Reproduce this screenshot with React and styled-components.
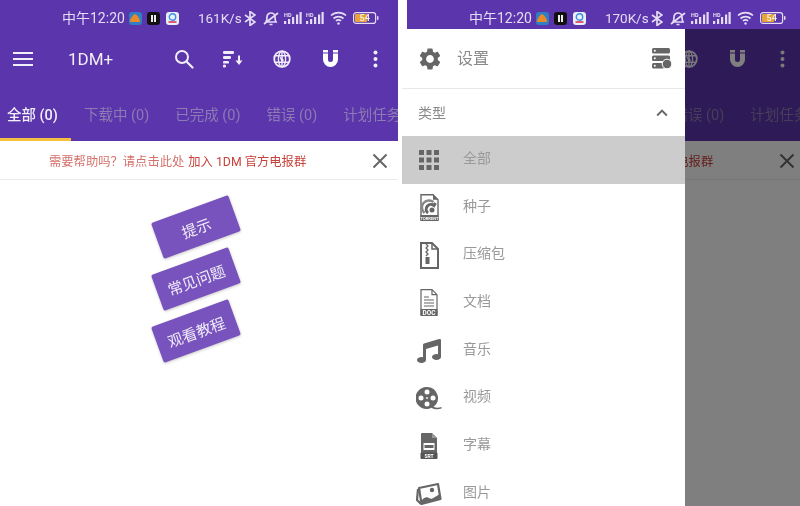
import React from 'react'
import styled, { createGlobalStyle } from 'styled-components'
import { MdSettings, MdKeyboardArrowUp } from 'react-icons/md'
import { FaMusic } from 'react-icons/fa'

const GlobalStyle = createGlobalStyle`
  html, body { margin: 0; padding: 0; background: #fff; }
  body { width: 800px; height: 506px; overflow: hidden; font-family: Roboto, "Noto Sans CJK SC", sans-serif; }
`

const Page = styled.div`
  display: flex;
  gap: 4px;
  width: 800px;
  height: 506px;
  overflow: hidden;
  background: #fff;
  filter: blur(0.4px);
`

const Phone = styled.div`
  position: relative;
  width: 398px;
  height: 506px;
  overflow: hidden;
  flex: none;
`

const Screen = styled.div`
  display: flex;
  flex-direction: column;
  width: 398px;
  height: 506px;
  margin-left: ${p => p.$shift || 0}px;
`

const Header = styled.div`
  background: #5b35ac;
`

const StatusBar = styled.div`
  position: relative;
  z-index: 3;
  display: flex;
  align-items: center;
  height: 22px;
  padding: 7px 0 0 62px;
  color: #e4dcf2;
  font-size: 14px;
  background: #5b35ac;
`

const Clock = styled.span`
  padding-bottom: 2px;
`

const AppDot = styled.span`
  width: 13px;
  height: 13px;
  margin-left: ${p => p.$gap}px;
  border-radius: 3px;
  background: ${p => p.$color};
  display: flex;
  align-items: center;
  justify-content: center;
  flex: none;
`

const Speed = styled.span`
  margin-left: 19px;
  font-size: 13.5px;
  width: 45px;
`

const StatusIcon = styled.svg`
  margin-left: ${p => p.$gap}px;
  flex: none;
`

const Toolbar = styled.div`
  display: flex;
  align-items: center;
  height: 60px;
  padding: 0 3px 0 13px;
  color: #f2eef9;
`

const Title = styled.div`
  margin-left: 35px;
  font-size: 17px;
  font-weight: 400;
`

const Actions = styled.div`
  display: flex;
  margin-left: auto;
`

const Action = styled.div`
  display: flex;
  align-items: center;
  justify-content: center;
  width: ${p => p.$width || 49}px;
`

const Tabs = styled.div`
  display: flex;
  height: 52px;
  margin-left: -6px;
  overflow: hidden;
`

const Tab = styled.div`
  flex: none;
  padding: 14px 13px 0;
  box-sizing: border-box;
  height: 52px;
  font-size: 14.5px;
  white-space: nowrap;
  font-weight: ${p => (p.$active ? 500 : 400)};
  color: ${p => (p.$active ? '#f3effa' : '#8d7bb4')};
  border-bottom: 3px solid ${p => (p.$active ? '#f5bf42' : 'transparent')};
`

const Banner = styled.div`
  display: flex;
  align-items: center;
  height: 37px;
  padding: 1px 0 0 49px;
  border-bottom: 1px solid #ebebeb;
  background: #fff;
  font-size: 12.3px;
  color: #d4716b;
`

const BannerLink = styled.span`
  margin-left: 4px;
  color: #c8413a;
`

const Close = styled.svg`
  margin-left: auto;
  margin-right: 10px;
`

const Body = styled.div`
  flex: 1;
  display: flex;
  flex-direction: column;
  align-items: center;
  gap: 14px;
  padding: 28px 6px 0 0;
  background: #fff;
`

const TipButton = styled.div`
  width: 82px;
  height: 38px;
  display: flex;
  align-items: center;
  justify-content: center;
  border-radius: 2px;
  background: #7853bd;
  color: #f0ebf8;
  font-size: 15px;
  transform: rotate(-20deg);
  box-shadow: 0 1px 3px rgba(0, 0, 0, 0.22);
`

const Scrim = styled.div`
  position: absolute;
  top: 29px;
  left: 0;
  right: 0;
  bottom: 0;
  background: rgba(0, 0, 0, 0.5);
`

const Drawer = styled.div`
  position: absolute;
  top: 29px;
  left: 0;
  bottom: 0;
  width: 283px;
  background: #fff;
  color: #8a8a8a;
`

const SettingsRow = styled.div`
  display: flex;
  align-items: center;
  height: 59px;
  padding: 0 13px 0 15px;
  border-bottom: 1px solid #e8e8e8;
  font-size: 16px;
`

const SettingsLabel = styled.span`
  margin-left: 14px;
  padding-bottom: 4px;
`

const ServerIcon = styled.svg`
  margin-left: auto;
`

const SectionRow = styled.div`
  display: flex;
  align-items: center;
  justify-content: space-between;
  height: 47px;
  padding: 0 12px 0 16px;
  font-size: 14px;
  color: #8a8a8a;
`

const SectionLabel = styled.span`
  padding-bottom: 2px;
`

const Item = styled.div`
  display: flex;
  align-items: center;
  height: 47.7px;
  font-size: 14px;
  color: #999;
  background: ${p => (p.$active ? '#cccccc' : 'transparent')};
`

const ItemIcon = styled.div`
  width: 54px;
  margin-right: 7px;
  display: flex;
  justify-content: center;
  color: #666;
`

const ItemLabel = styled.span`
  padding-bottom: 6px;
`

const Menu = () => (
  <svg width="20" height="16" viewBox="0 0 20 16">
    <path d="M0 2h20M0 8h20M0 14h20" stroke="currentColor" strokeWidth="2.2" />
  </svg>
)

const Search = () => (
  <svg width="20" height="20" viewBox="0 0 20 20" fill="none">
    <circle cx="8" cy="8" r="6" stroke="currentColor" strokeWidth="2" />
    <path d="M12.5 12.5l6 6" stroke="currentColor" strokeWidth="2.2" strokeLinecap="round" />
  </svg>
)

const Sort = () => (
  <svg width="20" height="18" viewBox="0 0 20 18" fill="currentColor">
    <rect x="0" y="1" width="11" height="3" rx="1.2" />
    <rect x="0" y="6" width="8" height="3" rx="1.2" />
    <rect x="0" y="11" width="6" height="2.6" rx="1.2" />
    <circle cx="1.5" cy="16" r="1.6" />
    <path d="M15 5.5h2v5h2.5L16 15l-3.5-4.500H15z" />
  </svg>
)

const Globe = () => (
  <svg width="18" height="18" viewBox="0 0 18 18" fill="none" stroke="currentColor" strokeWidth="1.4">
    <circle cx="9" cy="9" r="7.800" strokeWidth="1.800" />
    <ellipse cx="9" cy="9" rx="3.600" ry="7.800" />
    <path d="M1.500 5.800h15M1.500 12.200h15M9 1v16" />
    <path d="M6.500 6l4.500 4-2 2.500-1.500-3z" fill="currentColor" stroke="none" />
  </svg>
)

const Magnet = () => (
  <svg width="17" height="18" viewBox="0 0 17 18" fill="#fff">
    <rect x="1" y="0" width="5" height="2.500" />
    <rect x="11" y="0" width="5" height="2.500" />
    <path d="M1 3.500h5v6a2.500 2.500 0 0 0 5 0v-6h5v6a7.500 7.500 0 0 1-15 0z" />
  </svg>
)

const Dots = () => (
  <svg width="5" height="18" viewBox="0 0 5 18" fill="currentColor">
    <circle cx="2.500" cy="2.500" r="2" />
    <circle cx="2.500" cy="9" r="2" />
    <circle cx="2.500" cy="15.500" r="2" />
  </svg>
)

const Signal = ({ gap }) => (
  <StatusIcon $gap={gap} width="18" height="13" viewBox="0 0 18 13" fill="#e4dcf2">
    <rect x="0" y="9" width="2.200" height="3" />
    <rect x="4" y="7" width="2.200" height="5" />
    <rect x="8" y="5" width="2.200" height="7" />
    <rect x="12" y="2.500" width="2.200" height="9.500" />
    <rect x="15.500" y="0" width="2.200" height="12" />
    <text x="0" y="5" fontSize="5.500" fontWeight="700" fontFamily="Roboto, sans-serif">HD</text>
  </StatusIcon>
)

const StatusLine = ({ speed }) => (
  <StatusBar>
    <Clock>中午12:20</Clock>
    <AppDot $gap={4} $color="#2f7fc4">
      <svg width="10" height="8" viewBox="0 0 10 8"><path d="M0 8c0-4 3-7 5-8 2 1 5 4 5 8z" fill="#e88a2a" /></svg>
    </AppDot>
    <AppDot $gap={5} $color="#111">
      <svg width="7" height="7" viewBox="0 0 7 7"><path d="M1 0h2v7H1zM4 0h2v7H4z" fill="#eee" /></svg>
    </AppDot>
    <AppDot $gap={6} $color="#e9eef8">
      <svg width="9" height="10" viewBox="0 0 9 10"><circle cx="4.500" cy="4" r="3.200" fill="none" stroke="#3d8fe0" strokeWidth="1.400" /><rect x="0.500" y="8" width="8" height="2" fill="#e05a7a" /></svg>
    </AppDot>
    <Speed>{speed}</Speed>
    <StatusIcon $gap={1} width="12" height="15" viewBox="0 0 12 15" fill="none" stroke="#e4dcf2" strokeWidth="1.700">
      <path d="M1 4l10 7-5 3.500V.5l5 3.500L1 11" />
    </StatusIcon>
    <StatusIcon $gap={7} width="16" height="15" viewBox="0 0 16 15" fill="none" stroke="#e4dcf2" strokeWidth="1.700">
      <path d="M3 11c1-2 1-3 1-5a4 4 0 0 1 8 0c0 2 0 3 1 5zM6.500 13.500h3M1 13L15 2" />
    </StatusIcon>
    <Signal gap={5} />
    <Signal gap={4} />
    <StatusIcon $gap={6} width="17" height="14" viewBox="0 0 17 14" fill="none" stroke="#e4dcf2" strokeWidth="1.700">
      <path d="M1 4.500a11 11 0 0 1 15 0M3.500 7.500a7.500 7.500 0 0 1 10 0M6 10a3.500 3.500 0 0 1 5 0" />
      <circle cx="8.500" cy="12.500" r="1.200" fill="#e4dcf2" stroke="none" />
    </StatusIcon>
    <StatusIcon $gap={6} width="26" height="12" viewBox="0 0 26 12">
      <rect x="0.600" y="0.600" width="22" height="10.800" rx="2.500" fill="none" stroke="#e4dcf2" strokeWidth="1.200" />
      <rect x="2" y="2" width="12" height="8" rx="1" fill="#e8a33a" />
      <rect x="24" y="4" width="1.500" height="4" rx="0.700" fill="#e4dcf2" />
      <text x="6.500" y="9.300" fontSize="9" fontWeight="700" fill="#f5efd8" fontFamily="Roboto, sans-serif">54</text>
    </StatusIcon>
  </StatusBar>
)

const AppScreen = ({ speed, shift, children }) => (
  <Phone>
    <Screen $shift={shift}>
      <Header>
        <StatusLine speed={speed} />
        <Toolbar>
          <Menu />
          <Title>1DM+</Title>
          <Actions>
            <Action><Search /></Action>
            <Action><Sort /></Action>
            <Action><Globe /></Action>
            <Action><Magnet /></Action>
            <Action $width={40}><Dots /></Action>
          </Actions>
        </Toolbar>
        <Tabs>
          <Tab $active>全部 (0)</Tab>
          <Tab>下载中 (0)</Tab>
          <Tab>已完成 (0)</Tab>
          <Tab>错误 (0)</Tab>
          <Tab>计划任务 (0)</Tab>
        </Tabs>
      </Header>
      <Banner>
        需要帮助吗？请点击此处<BannerLink>加入 1DM 官方电报群</BannerLink>
        <Close width="16" height="16" viewBox="0 0 16 16">
          <path d="M1.500 1.500l13 13M14.500 1.500l-13 13" stroke="#666" strokeWidth="2" />
        </Close>
      </Banner>
      <Body>
        <TipButton>提示</TipButton>
        <TipButton>常见问题</TipButton>
        <TipButton>观看教程</TipButton>
      </Body>
    </Screen>
    {children}
  </Phone>
)

const Server = () => (
  <ServerIcon width="20" height="21" viewBox="0 0 20 21" fill="#666">
    <rect x="0" y="0" width="18" height="5.500" rx="1.500" />
    <rect x="0" y="7.500" width="18" height="5.500" rx="1.500" />
    <rect x="0" y="15" width="12" height="5.500" rx="1.500" />
    <circle cx="2.800" cy="2.700" r="1" fill="#fff" />
    <circle cx="2.800" cy="10.200" r="1" fill="#fff" />
    <circle cx="2.800" cy="17.700" r="1" fill="#fff" />
    <circle cx="15" cy="16" r="4.800" stroke="#fff" strokeWidth="1" />
  </ServerIcon>
)

const GridIcon = () => (
  <svg width="20" height="20" viewBox="0 0 20 20" fill="#666">
    {[0, 7.500, 15].flatMap(y =>
      [0, 7.500, 15].map(x => <rect key={`${x}-${y}`} x={x} y={y} width="5" height="5" />)
    )}
  </svg>
)

const TorrentIcon = () => (
  <svg width="19" height="27" viewBox="0 0 19 27">
    <path d="M1 .7h12l5 5V26H1z" fill="#fff" stroke="#666" strokeWidth="1.400" />
    <path d="M13 .7v5h5z" fill="#666" />
    <path d="M4.500 19a7 7 0 0 1 9-11" fill="none" stroke="#888" strokeWidth="2.500" />
    <path d="M8 19a4 4 0 0 1 6-7.500l1.500-2.500" fill="none" stroke="#666" strokeWidth="3" />
    <circle cx="12" cy="16" r="2.500" fill="#666" />
    <rect x="0.500" y="21" width="18" height="6" fill="#666" />
    <text x="9.500" y="25.700" textAnchor="middle" fontSize="4" fontWeight="700" fill="#fff" fontFamily="Roboto, sans-serif">TORRENT</text>
  </svg>
)

const ZipIcon = () => (
  <svg width="19" height="27" viewBox="0 0 19 27" fill="none" stroke="#666" strokeWidth="2">
    <path d="M1 1h11l6 6v19H1z" />
    <path d="M12 1v6h6" strokeWidth="1.500" />
    <path d="M6 2l2 2-2 2 2 2-2 2 2 2-2 2" strokeWidth="1.300" />
    <rect x="5.500" y="15" width="4" height="7" fill="#666" stroke="none" />
  </svg>
)

const DocIcon = () => (
  <svg width="18" height="27" viewBox="0 0 18 27" fill="none" stroke="#666" strokeWidth="1.200">
    <path d="M1 .7h11l5 5V26H1z" />
    <path d="M12 .7v5h5M4 8h5M4 11h10M4 14h10M4 17h10" />
    <rect x="0.500" y="20" width="17" height="7" fill="#666" stroke="none" />
    <text x="9" y="26" textAnchor="middle" fontSize="6.500" fontWeight="700" fill="#fff" stroke="none" fontFamily="Roboto, sans-serif">DOC</text>
  </svg>
)

const ReelIcon = () => (
  <svg width="26" height="23" viewBox="0 0 26 23" fill="#666">
    <path d="M11 0a11 11 0 0 1 6.500 19.800c2.500 1.300 5 1.300 8 .2v1.500c-3.500 1.300-7 1-10-.7A11 11 0 1 1 11 0z" />
    <g fill="#fff">
      <circle cx="11" cy="5" r="2.500" />
      <circle cx="11" cy="17" r="2.500" />
      <circle cx="5" cy="11" r="2.500" />
      <circle cx="17" cy="11" r="2.500" />
      <circle cx="11" cy="11" r="0.900" />
    </g>
  </svg>
)

const SrtIcon = () => (
  <svg width="18" height="26" viewBox="0 0 18 26">
    <path d="M1.500 0H12l5 5v21H1V.500z" fill="#666" />
    <path d="M12 0v5h5" fill="#999" />
    <rect x="3.500" y="10" width="11" height="7" fill="#fff" />
    <rect x="4.500" y="12" width="9" height="3" fill="#666" />
    <rect x="0.500" y="19.500" width="17" height="6.500" rx="1" fill="#555" />
    <text x="9" y="25" textAnchor="middle" fontSize="5" fontWeight="700" fill="#fff" fontFamily="Roboto, sans-serif">SRT</text>
  </svg>
)

const PictureIcon = () => (
  <svg width="26" height="24" viewBox="0 0 26 24" fill="none" stroke="#666" strokeWidth="2.200">
    <path d="M3 6l19-4 2.500 15-19 5z" strokeLinejoin="round" fill="#fff" />
    <path d="M2 7l-1 11 4 4" strokeLinejoin="round" />
    <path d="M6 18c3-4 6-3 8-1.500 2 1 4-1 9-4l1 4.500-18 5z" fill="#666" stroke="none" />
    <circle cx="16" cy="8" r="2.200" fill="#666" stroke="none" />
  </svg>
)

const items = [
  { label: '全部', icon: <GridIcon />, active: true },
  { label: '种子', icon: <TorrentIcon /> },
  { label: '压缩包', icon: <ZipIcon /> },
  { label: '文档', icon: <DocIcon /> },
  { label: '音乐', icon: <FaMusic size={24} /> },
  { label: '视频', icon: <ReelIcon /> },
  { label: '字幕', icon: <SrtIcon /> },
  { label: '图片', icon: <PictureIcon /> },
]

const App = () => {
  return (
    <Page>
      <GlobalStyle />
      <AppScreen speed="161K/s" />
      <AppScreen speed="170K/s" shift={5}>
        <Scrim />
        <Drawer>
          <SettingsRow>
            <MdSettings size={26} color="#666" />
            <SettingsLabel>设置</SettingsLabel>
            <Server />
          </SettingsRow>
          <SectionRow>
            <SectionLabel>类型</SectionLabel>
            <MdKeyboardArrowUp size={22} color="#666" />
          </SectionRow>
          {items.map(item => (
            <Item key={item.label} $active={item.active}>
              <ItemIcon>{item.icon}</ItemIcon>
              <ItemLabel>{item.label}</ItemLabel>
            </Item>
          ))}
        </Drawer>
      </AppScreen>
    </Page>
  )
}

export default App
